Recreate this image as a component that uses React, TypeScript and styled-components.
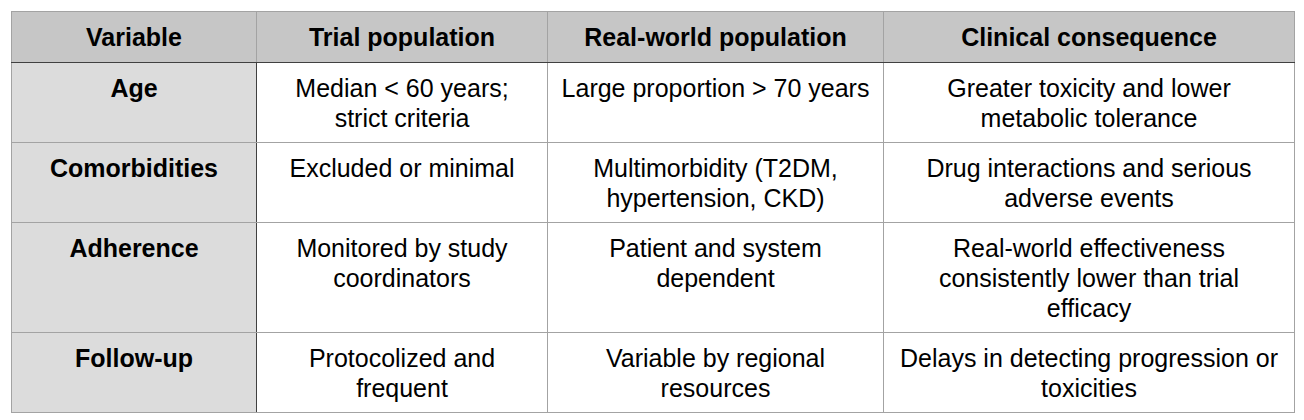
import styled, { createGlobalStyle } from 'styled-components';

type Row = {
  variable: string;
  trial: string[];
  real: string[];
  consequence: string[];
};

const ROWS: Row[] = [
  {
    variable: 'Age',
    trial: ['Median < 60 years;', 'strict criteria'],
    real: ['Large proportion > 70 years'],
    consequence: ['Greater toxicity and lower', 'metabolic tolerance'],
  },
  {
    variable: 'Comorbidities',
    trial: ['Excluded or minimal'],
    real: ['Multimorbidity (T2DM,', 'hypertension, CKD)'],
    consequence: ['Drug interactions and serious', 'adverse events'],
  },
  {
    variable: 'Adherence',
    trial: ['Monitored by study', 'coordinators'],
    real: ['Patient and system', 'dependent'],
    consequence: [
      'Real-world effectiveness',
      'consistently lower than trial',
      'efficacy',
    ],
  },
  {
    variable: 'Follow-up',
    trial: ['Protocolized and', 'frequent'],
    real: ['Variable by regional', 'resources'],
    consequence: ['Delays in detecting progression or', 'toxicities'],
  },
];

const HEADERS = [
  'Variable',
  'Trial population',
  'Real-world population',
  'Clinical consequence',
];

const COL_WIDTHS = [245, 291, 336, 411];

const Lines = ({ lines }: { lines: string[] }) => (
  <>
    {lines.map((line, i) => (
      <Line key={i}>{line}</Line>
    ))}
  </>
);

const App = () => {
  return (
    <>
      <GlobalStyle />
      <Page>
        <Table>
          <colgroup>
            {COL_WIDTHS.map((w, i) => (
              <col key={i} style={{ width: w }} />
            ))}
          </colgroup>
          <thead>
            <tr>
              {HEADERS.map((h) => (
                <HeadCell key={h}>{h}</HeadCell>
              ))}
            </tr>
          </thead>
          <tbody>
            {ROWS.map((row) => (
              <tr key={row.variable}>
                <VariableCell>{row.variable}</VariableCell>
                <Cell>
                  <Lines lines={row.trial} />
                </Cell>
                <Cell>
                  <Lines lines={row.real} />
                </Cell>
                <Cell>
                  <Lines lines={row.consequence} />
                </Cell>
              </tr>
            ))}
          </tbody>
        </Table>
      </Page>
    </>
  );
};

export default App;

const GlobalStyle = createGlobalStyle`
  body {
    margin: 0;
    background: #ffffff;
    font-family: 'Liberation Sans', Arial, Helvetica, sans-serif;
    color: #000000;
  }
`;

const Page = styled.main`
  padding: 11px 0 0 11px;
`;

const Table = styled.table`
  width: 1284px;
  table-layout: fixed;
  border-collapse: collapse;

  font-size: 25px;
  line-height: 30px;
`;

const BaseCell = styled.td`
  padding: 10px 4px 9px;
  border: 1px solid #a3a3a3;

  text-align: center;
  vertical-align: top;
`;

const HeadCell = styled(BaseCell).attrs({ as: 'th' })`
  height: 30px;
  padding: 10px 4px;
  border-bottom: 1px solid #404040;

  background-color: #c6c6c6;
  font-weight: 700;
`;

const VariableCell = styled(BaseCell)`
  height: 60px;
  border-right: 1px solid #404040;

  background-color: #dcdcdc;
  font-weight: 700;
`;

const Cell = styled(BaseCell)`
  background-color: #ffffff;
`;

const Line = styled.span`
  display: block;
  white-space: nowrap;
`;
